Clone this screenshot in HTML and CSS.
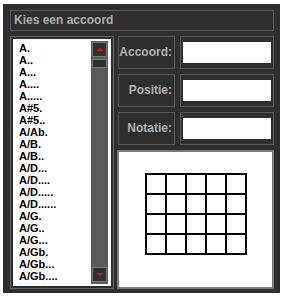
FILE: index.html
```html
<!DOCTYPE html>
<html lang="nl">
<head>
  <meta charset="UTF-8" />
  <title>Kies een accoord</title>
  <link rel="stylesheet" href="styles.css">
</head>
<body>

  <div class="panel">
    <div class="title">Kies een accoord</div>

    <div class="main">
      <div class="list-box">
        <div class="list">
          <ul class="items">
            <li>A.</li>
            <li>A..</li>
            <li>A...</li>
            <li>A....</li>
            <li>A.....</li>
            <li>A#5.</li>
            <li>A#5..</li>
            <li>A/Ab.</li>
            <li>A/B.</li>
            <li>A/B..</li>
            <li>A/D...</li>
            <li>A/D....</li>
            <li>A/D.....</li>
            <li>A/D......</li>
            <li>A/G.</li>
            <li>A/G..</li>
            <li>A/G...</li>
            <li>A/Gb.</li>
            <li>A/Gb...</li>
            <li>A/Gb....</li>
          </ul>
          <div class="scrollbar">
            <div class="scroll-btn up"></div>
            <div class="thumb"></div>
            <div class="track"></div>
            <div class="scroll-btn down"></div>
          </div>
        </div>
      </div>

      <div class="side">
        <div class="field">
          <div class="label">Accoord:</div>
          <div class="input-box"><div class="input"></div></div>
        </div>
        <div class="field">
          <div class="label">Positie:</div>
          <div class="input-box"><div class="input"></div></div>
        </div>
        <div class="field">
          <div class="label">Notatie:</div>
          <div class="input-box"><div class="input"></div></div>
        </div>

        <div class="diagram">
          <svg width="153" height="135" viewBox="0 0 153 135">
            <g stroke="#000" stroke-width="2" fill="none" stroke-linecap="square">
              <line x1="27" y1="22" x2="27" y2="102"/>
              <line x1="47" y1="22" x2="47" y2="102"/>
              <line x1="67" y1="22" x2="67" y2="102"/>
              <line x1="87" y1="22" x2="87" y2="102"/>
              <line x1="107" y1="22" x2="107" y2="102"/>
              <line x1="127" y1="22" x2="127" y2="102"/>
              <line x1="27" y1="22" x2="127" y2="22"/>
              <line x1="27" y1="42" x2="127" y2="42"/>
              <line x1="27" y1="62" x2="127" y2="62"/>
              <line x1="27" y1="82" x2="127" y2="82"/>
              <line x1="27" y1="102" x2="127" y2="102"/>
            </g>
          </svg>
        </div>
      </div>
    </div>
  </div>

</body>
</html>
```

FILE: styles.css
```css
body {
  margin: 0;
  background: #ffffff;
  font-family: 'Liberation Sans', Arial, sans-serif;
}

.panel {
  box-sizing: border-box;
  width: 277px;
  height: 289px;
  margin: 4px 0 0 3px;
  padding: 6px 6px 0 7px;
  background: #2e2e2e;
}

.title {
  box-sizing: border-box;
  height: 21px;
  padding-left: 3px;
  border: 1px solid #5a5a5a;
  color: #acacac;
  font-size: 12px;
  font-weight: bold;
  line-height: 19px;
}

.main {
  display: flex;
  gap: 4px;
  margin-top: 5px;
}

.list-box {
  box-sizing: border-box;
  width: 104px;
  height: 253px;
  padding: 2px;
  border: 1px solid #666;
}

.list {
  display: flex;
  height: 100%;
  background: #ffffff;
}

.items {
  flex: 1;
  margin: 0;
  padding: 3px 0 0 6px;
  list-style: none;
  color: #000;
  font-size: 11px;
  font-weight: bold;
  line-height: 12px;
  overflow: hidden;
}

.scrollbar {
  display: flex;
  flex-direction: column;
  width: 17px;
  margin: 2px 3px 2px 0;
  padding: 1px 1px 2px;
  box-sizing: border-box;
  background: #5a5a5a;
}

.scroll-btn,
.thumb {
  box-sizing: border-box;
  height: 15px;
  background: #2f2f2f;
  border: 1px solid #7a7a7a;
  display: flex;
  align-items: center;
  justify-content: center;
}

.thumb {
  height: 9px;
  margin-top: 2px;
}

.track {
  flex: 1;
}

.scroll-btn::after {
  content: "";
  width: 0;
  height: 0;
  border-left: 4px solid transparent;
  border-right: 4px solid transparent;
}

.scroll-btn.up::after {
  border-bottom: 3px solid #e01010;
}

.scroll-btn.down::after {
  border-top: 3px solid #e01010;
}

.side {
  flex: 1;
  display: flex;
  flex-direction: column;
  gap: 5px;
}

.field {
  display: flex;
  gap: 5px;
  height: 33px;
}

.label {
  box-sizing: border-box;
  width: 57px;
  padding-right: 2px;
  border: 1px solid #5a5a5a;
  color: #b0b0b0;
  font-size: 12px;
  font-weight: bold;
  line-height: 31px;
  text-align: right;
}

.input-box {
  flex: 1;
  box-sizing: border-box;
  padding: 5px 2px;
  border: 1px solid #5a5a5a;
}

.input {
  height: 21px;
  background: #ffffff;
}

.diagram {
  box-sizing: border-box;
  height: 139px;
  margin-left: -1px;
  border: 2px solid #7a7a7a;
  background: #ffffff;
}

.diagram svg {
  display: block;
}
```
